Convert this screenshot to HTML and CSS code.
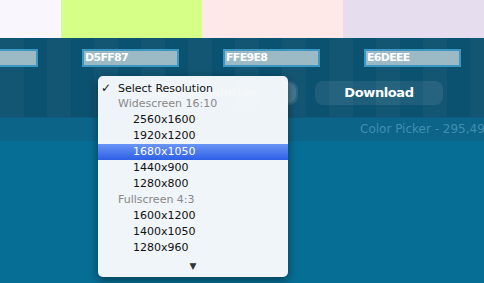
FILE: index.html
```html
<!DOCTYPE html>
<html lang="en">
<head>
    <meta charset="UTF-8">
    <title>Color Picker</title>
    <link rel="stylesheet" href="styles.css">
</head>
<body>
<div class="swatches">
    <div class="swatch first" style="background:#f9f6fe"></div>
    <div class="swatch" style="background:#d5ff87"></div>
    <div class="swatch" style="background:#ffe9e8"></div>
    <div class="swatch" style="background:#e6deee"></div>
</div>
<div class="controls">
    <div class="codes">
        <div class="col"><input type="text" value="F9F6FE"/></div>
        <div class="col"><input type="text" value="D5FF87"/></div>
        <div class="col"><input type="text" value="FFE9E8"/></div>
        <div class="col"><input type="text" value="E6DEEE"/></div>
    </div>
    <div class="buttons">
        <div class="select-btn"><span class="label">Select Resolution</span><span class="arrow"></span></div>
        <div class="download">Download</div>
    </div>
</div>
<div class="picker">Color Picker - 295,49</div>
<div class="main"></div>

<div class="menu">
    <div class="item title"><span class="check">&#10003;</span>Select Resolution</div>
    <div class="item group">Widescreen 16:10</div>
    <div class="item">2560x1600</div>
    <div class="item">1920x1200</div>
    <div class="item active">1680x1050</div>
    <div class="item">1440x900</div>
    <div class="item">1280x800</div>
    <div class="item group">Fullscreen 4:3</div>
    <div class="item">1600x1200</div>
    <div class="item">1400x1050</div>
    <div class="item">1280x960</div>
    <div class="more">&#9660;</div>
</div>
</body>
</html>
```

FILE: styles.css
```css
body{
    margin:0;
    width:484px;
    height:283px;
    overflow:hidden;
    background:#066e94;
    font-family:"DejaVu Sans", "Liberation Sans", sans-serif;
    position:relative;
}

.swatches{
    display:flex;
    height:38px;
}
.swatch{
    width:141px;
    flex:none;
}
.swatch.first{
    width:61px;
}

.controls{
    height:79px;
    background:#0b5170;
    background-image:linear-gradient(90deg, rgba(255,255,255,0.03) 0 50%, transparent 50% 100%);
    background-size:47px 100%;
}
.codes{
    display:flex;
    margin-left:-80px;
    padding-top:8px;
}
.col{
    width:141px;
    flex:none;
    padding-left:21px;
    box-sizing:border-box;
}
.col input{
    outline:none;
    width:97px;
    height:18px;
    box-sizing:border-box;
    border:2px solid #3b97c2;
    background:#9bbac5;
    color:#fff;
    font-family:"DejaVu Sans", sans-serif;
    font-weight:bold;
    font-size:11px;
    padding:0 1px;
    letter-spacing:-0.7px;
}

.buttons{
    display:flex;
    gap:17px;
    margin-top:14px;
    padding-left:140px;
}
.select-btn{
    width:158px;
    height:24px;
    border-radius:9px;
    background:rgba(255,255,255,0.1);
    color:#fff;
    font-size:11px;
    font-weight:bold;
    line-height:24px;
    padding-left:8px;
    box-sizing:border-box;
    white-space:nowrap;
    display:flex;
    align-items:center;
}
.select-btn .label{
    flex:1;
}
.select-btn .arrow{
    width:14px;
    height:20px;
    margin-right:2px;
    border-radius:0 8px 8px 0;
    background:rgba(255,255,255,0.12);
}
.download{
    width:128px;
    height:24px;
    border-radius:8px;
    background:rgba(255,255,255,0.08);
    color:#fff;
    font-family:"DejaVu Sans", sans-serif;
    font-weight:bold;
    font-size:13px;
    line-height:24px;
    text-align:center;
    letter-spacing:-0.4px;
}

.picker{
    height:23px;
    background:#0c6589;
    border-top:1px solid #0e5b7b;
    color:#3f8db0;
    font-family:"DejaVu Sans", sans-serif;
    font-size:12px;
    line-height:23px;
    padding-left:360px;
    white-space:nowrap;
    overflow:hidden;
}

.menu{
    position:absolute;
    left:98px;
    top:76px;
    width:190px;
    height:201px;
    box-sizing:border-box;
    padding-top:4px;
    background:rgba(243,247,250,0.985);
    border-radius:5px;
    box-shadow:0 3px 10px rgba(0,0,0,0.45);
}
.item{
    height:16px;
    line-height:16px;
    font-size:11px;
    color:#111;
    padding-left:35px;
    white-space:nowrap;
}
.item.title{
    padding-left:3px;
}
.item .check{
    display:inline-block;
    width:17px;
    font-size:12px;
    font-weight:bold;
}
.item.group{
    padding-left:20px;
    color:#888;
}
.item.active{
    background:linear-gradient(#6a95f6, #2d5fe6);
    color:#fff;
}
.more{
    text-align:center;
    font-size:9px;
    color:#333;
    padding-top:5px;
}
```
